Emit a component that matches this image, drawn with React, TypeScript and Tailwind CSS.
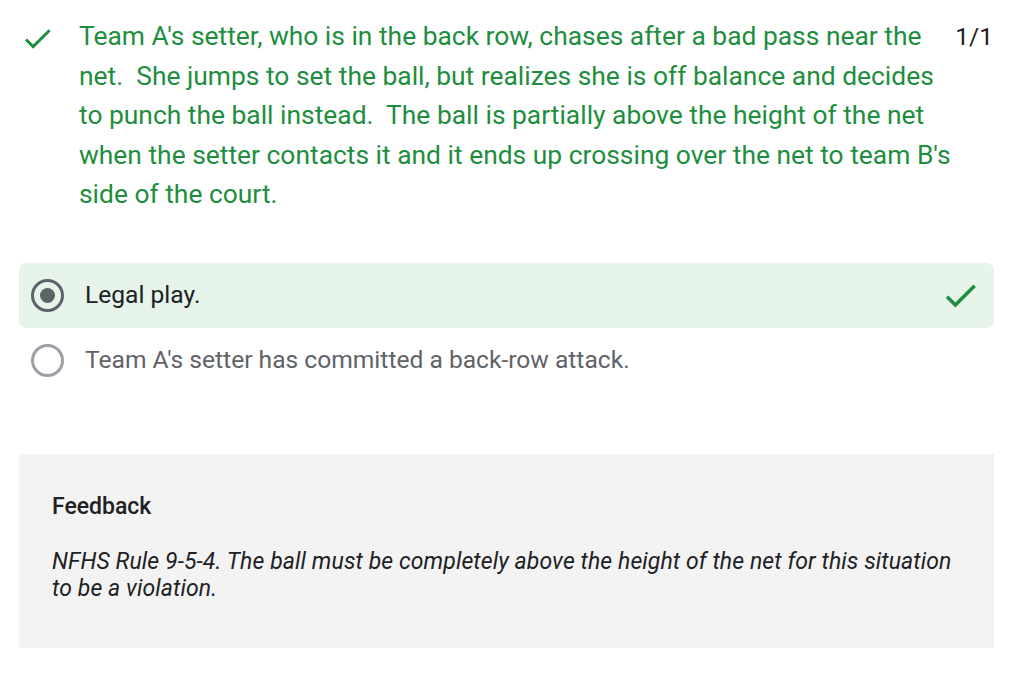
import React from "react";

function Check({ className }: { className?: string }) {
  return (
    <svg viewBox="0 0 24 24" className={className} fill="currentColor">
      <path d="M9 16.17L4.83 12l-1.42 1.41L9 19 21 7l-1.41-1.41z" />
    </svg>
  );
}

export default function App() {
  return (
    <div className="w-[1023px] h-[674px] bg-white font-['Roboto',sans-serif] overflow-hidden">
      <div className="flex items-start pt-[17px] pl-[20px] pr-[30px]">
        <Check className="w-[35px] h-[35px] text-[#1e8e3e] mt-[4px] shrink-0" />
        <p className="ml-[24px] w-[876px] shrink-0 text-[26.4px] leading-[39.5px] text-[#1e8e3e]">
          Team A's setter, who is in the back row, chases after a bad pass near the net.&nbsp; She jumps to set the
          ball, but realizes she is off balance and decides to punch the ball instead.&nbsp; The ball is partially
          above the height of the net when the setter contacts it and it ends up crossing over the net to team B's
          side of the court.
        </p>
        <span className="ml-auto text-[24.5px] leading-[39.5px] text-[#202124]">1/1</span>
      </div>

      <div className="mx-[19px] w-[975px] mt-[48px]">
        <div className="flex items-center h-[65px] bg-[#e6f4ea] rounded-[7px] pl-[12px] pr-[13px]">
          <span className="w-[33px] h-[33px] rounded-full border-[3.5px] border-[#5f6368] flex items-center justify-center">
            <span className="w-[15px] h-[15px] rounded-full bg-[#5f6368]" />
          </span>
          <span className="ml-[21px] text-[24.6px] text-[#202124]">Legal play.</span>
          <Check className="ml-auto w-[41px] h-[41px] text-[#1e8e3e]" />
        </div>
        <div className="flex items-center h-[65px] pl-[12px]">
          <span className="w-[33px] h-[33px] rounded-full border-[3px] border-[#9aa0a6]" />
          <span className="ml-[21px] text-[24.6px] text-[#5f6368]">Team A's setter has committed a back-row attack.</span>
        </div>
      </div>

      <div className="mx-[19px] w-[975px] mt-[61px] h-[194px] bg-[#f3f3f3] pt-[39px] pl-[33px] pr-[28px]">
        <div className="text-[23px] font-medium text-[#202124] leading-[28px]">Feedback</div>
        <p className="mt-[27px] text-[23px] italic tracking-[0.1px] text-[#202124] leading-[27px]">
          NFHS Rule 9-5-4. The ball must be completely above the height of the net for this situation to be a
          violation.
        </p>
      </div>
    </div>
  );
}
